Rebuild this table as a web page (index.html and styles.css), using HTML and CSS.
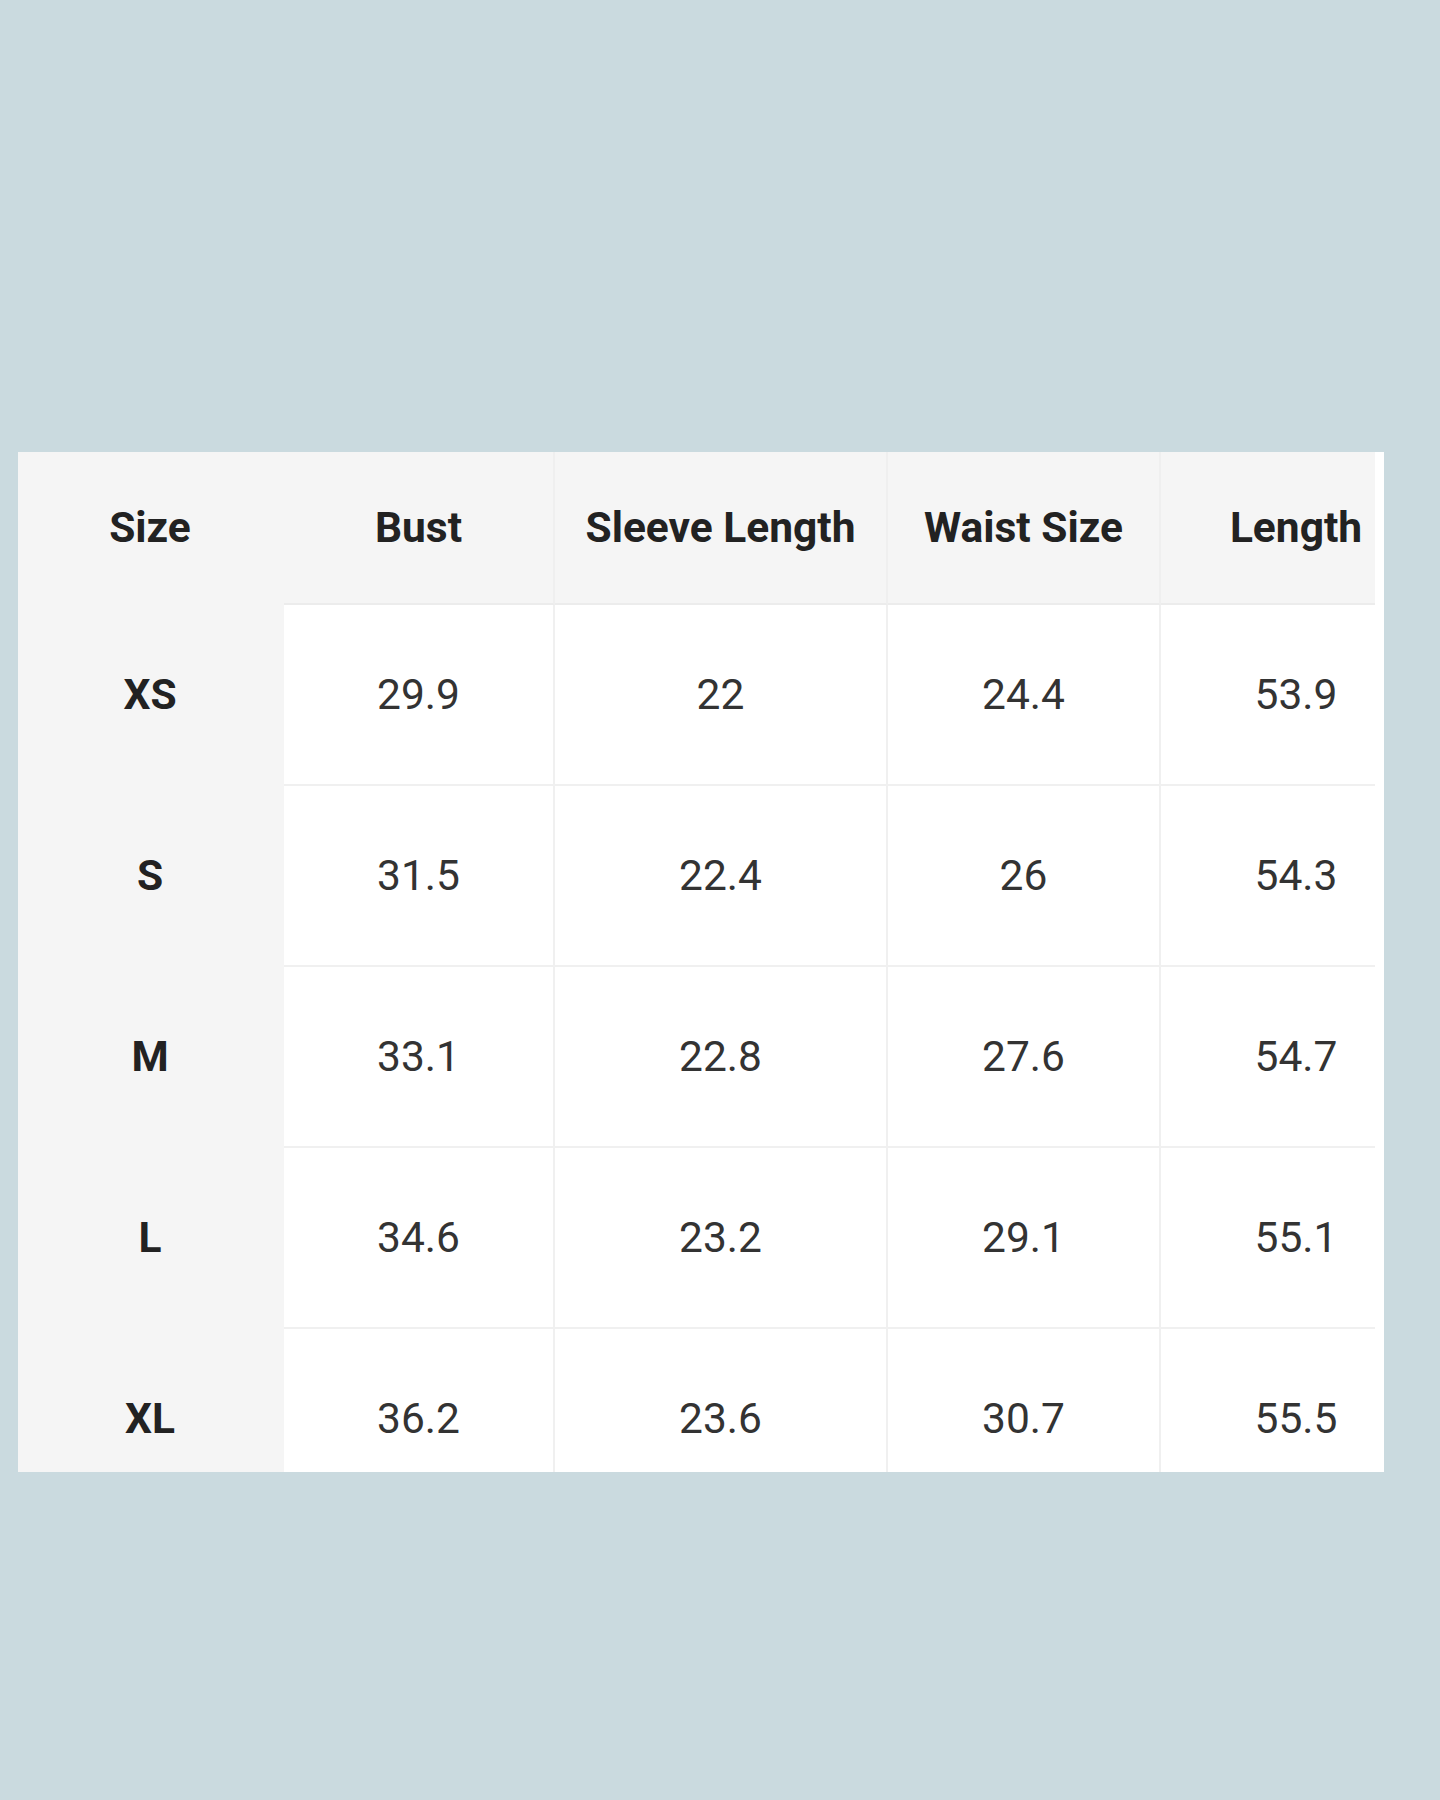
FILE: index.html
```html
<!DOCTYPE html>
<html lang="en">
<head>
<meta charset="utf-8">
<title>Size Chart</title>
<link rel="stylesheet" href="styles.css">
</head>
<body>
<div class="page">
  <div class="chart">
    <div class="scroller">
      <table class="size-table">
        <colgroup>
          <col class="c-size"><col class="c-bust"><col class="c-sleeve"><col class="c-waist"><col class="c-length">
        </colgroup>
        <thead>
          <tr>
            <th class="first">Size</th>
            <th>Bust</th>
            <th>Sleeve Length</th>
            <th>Waist Size</th>
            <th>Length</th>
          </tr>
        </thead>
        <tbody>
          <tr><th class="first">XS</th><td>29.9</td><td>22</td><td>24.4</td><td>53.9</td></tr>
          <tr><th class="first">S</th><td>31.5</td><td>22.4</td><td>26</td><td>54.3</td></tr>
          <tr><th class="first">M</th><td>33.1</td><td>22.8</td><td>27.6</td><td>54.7</td></tr>
          <tr><th class="first">L</th><td>34.6</td><td>23.2</td><td>29.1</td><td>55.1</td></tr>
          <tr><th class="first">XL</th><td>36.2</td><td>23.6</td><td>30.7</td><td>55.5</td></tr>
        </tbody>
      </table>
    </div>
  </div>
</div>
</body>
</html>
```

FILE: styles.css
```css
html, body {
  margin: 0;
  padding: 0;
}
body {
  background: #cadadf;
  font-family: Roboto, "Liberation Sans", Arial, sans-serif;
}
.page {
  width: 1440px;
  height: 1800px;
  padding-top: 452px;
  padding-left: 18px;
  box-sizing: border-box;
}
.chart {
  width: 1366px;
  height: 1020px;
  background: #ffffff;
  overflow: hidden;
}
.scroller {
  width: 1357px;
  height: 1020px;
  overflow: hidden;
}
.size-table {
  border-collapse: separate;
  border-spacing: 0;
  table-layout: fixed;
  width: 1413px;
  font-size: 42.5px;
}
.c-size { width: 266px; }
.c-bust { width: 271px; }
.c-sleeve { width: 333px; }
.c-waist { width: 273px; }
.c-length { width: 270px; }

.size-table th,
.size-table td {
  padding: 0;
  text-align: center;
  vertical-align: middle;
  box-sizing: border-box;
  border-right: 2px solid #f0f0f0;
  border-bottom: 2px solid #f0f0f0;
}
.size-table tr > :last-child {
  border-right: none;
}
.size-table thead th {
  height: 153px;
  background: #f5f5f5;
  color: #222222;
  font-weight: 700;
  border-bottom-color: #ececec;
  border-right-color: #efefef;
}
.size-table tbody td,
.size-table tbody th {
  height: 181px;
}
.size-table tbody td {
  color: #333333;
  font-weight: 400;
  background: #ffffff;
}
.size-table .first {
  background: #f5f5f5;
  color: #222222;
  font-weight: 700;
  border-right-color: #f5f5f5;
  border-bottom-color: #f5f5f5;
}
```
